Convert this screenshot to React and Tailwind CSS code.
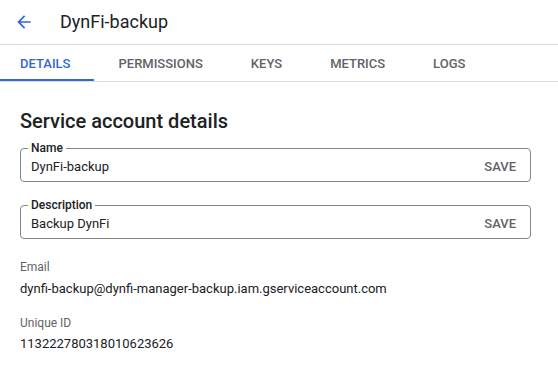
import React from 'react';

const tabs = ['DETAILS', 'PERMISSIONS', 'KEYS', 'METRICS', 'LOGS'];

const Field = ({ label, value }) => (
    <fieldset className="border border-[#80868b] rounded-[4px] pl-[7px] pr-[14px] pb-[4px] pt-0 m-0">
        <legend className="px-[3px] text-[12px] font-medium leading-[14px] text-[#202124]">{label}</legend>
        <div className="flex items-center justify-between pl-[3px] pt-[2px]">
            <span className="text-[13px] leading-[20px] text-[#202124]">{value}</span>
            <span className="text-[13px] font-medium text-[#5f6368]">SAVE</span>
        </div>
    </fieldset>
);

export default function App() {
    return (
        <div className="w-[558px] h-[370px] bg-white font-['Roboto',sans-serif] overflow-hidden">
            {/* Header */}
            <div className="h-[45px] flex items-center border-b border-[#dadce0]">
                <svg className="ml-[14px] w-[20px] h-[20px]" viewBox="0 0 24 24" fill="#3367d6">
                    <path d="M20 11H7.83l5.59-5.59L12 4l-8 8 8 8 1.41-1.41L7.83 13H20v-2z" />
                </svg>
                <h1 className="ml-[26px] text-[18px] text-[#202124] leading-none">DynFi-backup</h1>
            </div>

            {/* Tabs */}
            <div className="h-[37px] flex border-b border-[#dadce0]">
                {tabs.map((t, i) => (
                    <div
                        key={t}
                        className={`flex items-center pt-[3px] text-[13px] font-medium border-b-2 ${
                            i === 0 ? 'pl-5 pr-6 text-[#3367d6] border-[#3367d6]' : 'px-6 text-[#5f6368] border-transparent'
                        }`}
                    >
                        {t}
                    </div>
                ))}
            </div>

            {/* Content */}
            <div className="px-5">
                <h2 className="mt-[27px] text-[20px] font-medium leading-[24px] text-[#202124]">Service account details</h2>
                <div className="mt-[8px] w-[511px] flex flex-col gap-[16px]">
                    <Field label="Name" value="DynFi-backup" />
                    <Field label="Description" value="Backup DynFi" />
                </div>
                <div className="mt-[20px] text-[12px] leading-[16px] text-[#5f6368]">Email</div>
                <div className="mt-[4px] text-[13px] leading-[20px] text-[#202124]">dynfi-backup@dynfi-manager-backup.iam.gserviceaccount.com</div>
                <div className="mt-[16px] text-[12px] leading-[16px] text-[#5f6368]">Unique ID</div>
                <div className="mt-[3px] text-[13px] leading-[20px] text-[#202124]">113222780318010623626</div>
            </div>
        </div>
    );
}
